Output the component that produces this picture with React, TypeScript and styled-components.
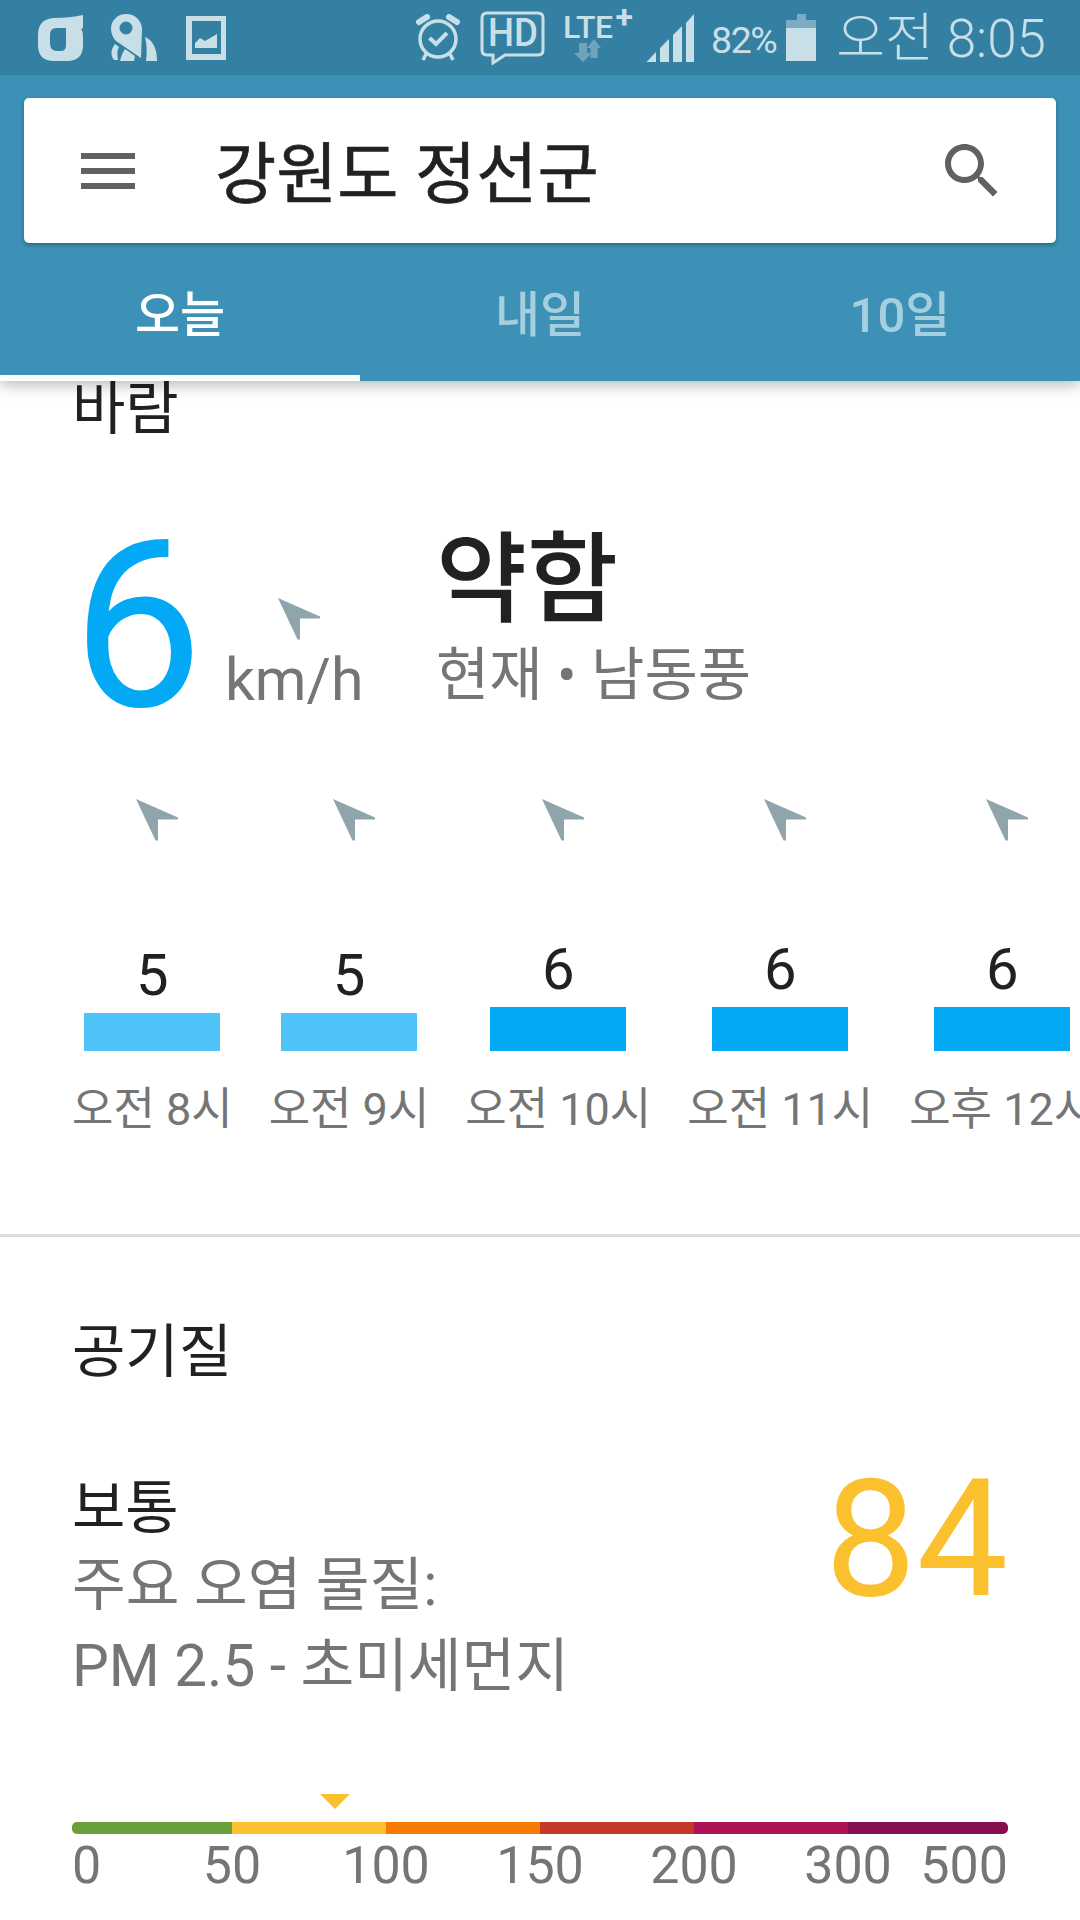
import React from "react";
import styled, { createGlobalStyle } from "styled-components";

const GlobalStyle = createGlobalStyle`
  html, body {
    margin: 0;
    padding: 0;
    background: #fff;
  }
  body {
    font-family: Roboto, "Noto Sans CJK KR", sans-serif;
  }
`;

const iconColor = "#c9dfe7";
const grey = "#757575";
const dark = "#212121";

const Screen = styled.div`
  width: 1080px;
  height: 1920px;
  overflow: hidden;
  display: flex;
  flex-direction: column;
  background: #fff;
`;

const TopArea = styled.header`
  position: relative;
  z-index: 2;
  background: #3d91b6;
  box-shadow: 0 4px 14px rgba(0, 0, 0, 0.28);
`;

const StatusBar = styled.div`
  height: 75px;
  background: #3480a2;
  display: flex;
  align-items: center;
  justify-content: space-between;
  padding: 0 34px 0 38px;
  color: ${iconColor};
`;

const StatusGroup = styled.div`
  display: flex;
  align-items: center;
`;

const LteBox = styled.div`
  width: 71px;
  height: 50px;
  margin: 3px 12px 0 18px;
  display: flex;
  flex-direction: column;
  align-items: flex-start;
`;

const LteText = styled.div`
  font-size: 32px;
  font-weight: 500;
  line-height: 27px;
  height: 27px;
  letter-spacing: -0.5px;
  white-space: nowrap;
`;

const LtePlus = styled.span`
  font-size: 32px;
  font-weight: 700;
  line-height: 0;
  vertical-align: 10px;
  letter-spacing: 0;
  margin-left: 3px;
`;

const Percent = styled.span`
  font-size: 37.5px;
  letter-spacing: -1.5px;
  margin: 4px 10px 0 17px;
`;

const Clock = styled.span`
  font-size: 53px;
  line-height: 60px;
  margin: 2px 0 0 20px;
  font-weight: 300;
`;

const SearchCard = styled.div`
  height: 145px;
  margin: 23px 24px 0;
  background: #fff;
  border-radius: 5px;
  box-shadow: 0 2px 4px rgba(0, 0, 0, 0.3);
  display: flex;
  align-items: center;
  padding: 0 48px 0 48px;
`;

const SearchTitle = styled.div`
  flex: 1;
  margin-left: 71px;
  margin-bottom: 4px;
  font-size: 66.5px;
  -webkit-text-stroke: 0.6px ${dark};
  color: ${dark};
  white-space: nowrap;
`;

const Tabs = styled.nav`
  display: flex;
  height: 138px;
`;

const Tab = styled.div<{ $active?: boolean }>`
  flex: 1;
  display: flex;
  align-items: center;
  justify-content: center;
  padding-top: 3px;
  box-sizing: border-box;
  font-size: 49px;
  font-weight: 500;
  color: ${(p) => (p.$active ? "#fff" : "#a5cfdf")};
  border-bottom: 6px solid ${(p) => (p.$active ? "#fff" : "transparent")};
`;

const SectionTitle = styled.h2`
  margin: 0;
  font-size: 58px;
  font-weight: 400;
  line-height: 68px;
  color: ${dark};
`;

const WindSection = styled.section`
  padding: 0 0 0 72px;
  margin-top: -6px;
  height: 862px;
  box-sizing: border-box;
  border-bottom: 3px solid #dcdcdc;
  overflow: hidden;
`;

const CurrentRow = styled.div`
  display: flex;
  height: 300px;
  margin-top: 49px;
`;

const BigValue = styled.div`
  font-size: 233px;
  font-weight: 400;
  line-height: 270px;
  color: #03a9f4;
`;

const UnitBlock = styled.div`
  width: 211px;
  margin-left: 22px;
  display: flex;
  flex-direction: column;
  height: 270px;
`;

const UnitArrow = styled.div`
  margin: 106px 0 0 53px;
  height: 42px;
`;

const Unit = styled.div`
  font-size: 59px;
  line-height: 70px;
  margin-top: 5px;
  color: ${grey};
`;

const WindSummary = styled.div`
  display: flex;
  flex-direction: column;
`;

const WindLevel = styled.div`
  font-size: 99px;
  font-weight: 500;
  line-height: 120px;
  margin-top: 28px;
  color: ${dark};
`;

const WindNote = styled.div`
  font-size: 58px;
  line-height: 70px;
  color: ${grey};
  white-space: nowrap;
`;

const HourRow = styled.div`
  display: flex;
  gap: 36px;
  margin-top: 7px;
`;

const HourCol = styled.div`
  display: flex;
  flex-direction: column;
  align-items: center;
  flex-shrink: 0;
`;

const HourArrow = styled.div`
  height: 42px;
  margin-left: 10px;
`;

const BarArea = styled.div`
  height: 210px;
  display: flex;
  flex-direction: column;
  justify-content: flex-end;
  align-items: center;
`;

const HourValue = styled.div`
  font-size: 58px;
  line-height: 70px;
  margin-bottom: 3px;
  color: ${dark};
`;

const HourBar = styled.div<{ $strong?: boolean }>`
  width: 136px;
  height: ${(p) => (p.$strong ? 44 : 38)}px;
  background: ${(p) => (p.$strong ? "#03a9f4" : "#4fc3f7")};
`;

const HourLabel = styled.div`
  font-size: 45px;
  line-height: 60px;
  margin-top: 29px;
  color: ${grey};
  white-space: nowrap;
`;

const AirSection = styled.section`
  padding: 0 72px;
`;

const AirTitle = styled(SectionTitle)`
  margin-top: 81px;
`;

const AirRow = styled.div`
  display: flex;
  justify-content: space-between;
  margin-top: 85px;
  height: 323px;
`;

const AirText = styled.div`
  display: flex;
  flex-direction: column;
`;

const AirStatus = styled.div`
  font-size: 58px;
  line-height: 74px;
  color: ${dark};
`;

const AirLine = styled.div`
  font-size: 58.4px;
  line-height: 81px;
  color: ${grey};
`;

const AirValue = styled.div`
  font-size: 163px;
  font-weight: 400;
  line-height: 190px;
  color: #fbc02d;
  margin-top: -26px;
`;

const Marker = styled.div`
  width: 0;
  height: 0;
  margin-left: 248px;
  border-left: 15px solid transparent;
  border-right: 15px solid transparent;
  border-top: 15px solid #fbc02d;
`;

const Scale = styled.div`
  display: flex;
  height: 12px;
  margin-top: 13px;
  border-radius: 5px;
  overflow: hidden;
`;

const ScaleSegment = styled.div<{ $width: number; $color: string }>`
  width: ${(p) => p.$width}px;
  background: ${(p) => p.$color};
`;

const ScaleLabels = styled.div`
  display: grid;
  grid-template-columns: 100px 120px 188px 120px 188px 120px 100px;
  font-size: 52px;
  line-height: 60px;
  margin-top: 2px;
  color: ${grey};
`;

const ScaleLabel = styled.span<{ $align: string }>`
  text-align: ${(p) => p.$align};
`;

const GLogo = () => (
  <svg width="45" height="46" viewBox="0 0 45 46" fill={iconColor}>
    <path
      fillRule="evenodd"
      d="M45 0V13L43 14Q45 16 45 22V30Q45 46 29 46H16Q0 46 0 30V20Q0 4 16 3Q32 3 45 0ZM18 13Q12 13 12 20V28Q12 36 19 36H23Q28 36 28 30V13Z"
    />
  </svg>
);

const PinLogo = () => (
  <svg width="46" height="47" viewBox="0 0 46 47" fill={iconColor} style={{ marginLeft: 28 }}>
    <path
      fillRule="evenodd"
      d="M15 0C24 0 30 6 31 14L30 44L5 27C2 24 0 19 0 15C0 6 7 0 15 0ZM15 7.5A6.5 6.5 0 1 0 15 20.5A6.5 6.5 0 1 0 15 7.5Z"
    />
    <path d="M4 30L8 33C6 37 6 41 7 46H3C-1 41 0 35 4 30Z" />
    <path d="M14 35L24 42L23 47H9C10 42 12 38 14 35Z" />
    <path d="M34 23C42 26 46 35 46 47H35C36 38 36 30 34 23Z" />
  </svg>
);

const PictureIcon = () => (
  <svg width="40" height="44" viewBox="0 0 40 44" fill={iconColor} style={{ marginLeft: 29 }}>
    <path
      fillRule="evenodd"
      d="M0 0H40V44H0ZM6 5V38H35V5ZM9 32V27L14 22L19 25L31 18V32Z"
    />
  </svg>
);

const AlarmIcon = () => (
  <svg width="45" height="47" viewBox="0 0 45 47" fill="none" stroke={iconColor}>
    <circle cx="22" cy="25" r="18" strokeWidth="3.5" />
    <path d="M3 8L11 3M41 8L33 3" strokeWidth="6" strokeLinecap="round" />
    <path d="M13.5 24L20 30L31 19" strokeWidth="4" />
    <path d="M10 40L7 46M34 40L37 46" strokeWidth="3.5" />
  </svg>
);

const HdIcon = () => (
  <svg width="65" height="54" viewBox="0 0 65 54" style={{ marginLeft: 19 }}>
    <path
      d="M7 2H58Q63 2 63 7V39Q63 44 58 44H25L13 52V44H7Q2 44 2 39V7Q2 2 7 2Z"
      fill="none"
      stroke={iconColor}
      strokeWidth="3"
    />
    <text
      x="33"
      y="35"
      textAnchor="middle"
      fontFamily="Roboto, sans-serif"
      fontSize="38"
      fontWeight="500"
      fill={iconColor}
      textLength="50"
      lengthAdjust="spacingAndGlyphs"
    >
      HD
    </text>
  </svg>
);

const LteArrows = () => (
  <svg width="28" height="23" viewBox="0 0 28 23" fill="#6fa4ba" style={{ marginLeft: 11, marginTop: -2 }}>
    <path d="M5 4H13V14H18L9 23L0 14H5Z" />
    <path d="M16.5 19H23.5V9H27L20 0L13 9H16.5Z" />
  </svg>
);

const SignalIcon = () => (
  <svg width="48" height="48" viewBox="0 0 48 48" fill={iconColor}>
    <path d="M0.5 48L10 38V48Z" />
    <path d="M14 34L23 25V48H14Z" />
    <path d="M27 21L36 12V48H27Z" />
    <path d="M40 9L48 0V48H40Z" />
  </svg>
);

const BatteryIcon = () => (
  <svg width="30" height="47" viewBox="0 0 30 47">
    <path d="M11 0H20V6H30V14H0V6H11Z" fill="#7aacc4" />
    <path d="M0 14H30V47H0Z" fill={iconColor} />
  </svg>
);

const MenuIcon = () => (
  <svg width="72" height="72" viewBox="0 0 24 24" fill="#616161">
    <path d="M3 18h18v-2H3v2zm0-5h18v-2H3v2zm0-5h18V6H3v2z" />
  </svg>
);

const SearchIcon = () => (
  <svg width="72" height="72" viewBox="0 0 24 24" fill="#616161">
    <path d="M15.5 14h-.79l-.28-.27C15.41 12.59 16 11.11 16 9.5 16 5.91 13.09 3 9.5 3S3 5.91 3 9.5 5.91 16 9.5 16c1.61 0 3.09-.59 4.23-1.57l.27.28v.79l5 4.99L20.49 19l-4.99-5zm-6 0C7.01 14 5 11.99 5 9.5S7.01 5 9.5 5 14 7.01 14 9.5 11.99 14 9.5 14z" />
  </svg>
);

const WindArrow = () => (
  <svg width="42" height="42" viewBox="0 0 42 42" fill="#90a4ae">
    <path d="M0 0L42 18.5V20.5H22V41.5H19.5Z" />
  </svg>
);

const hours = [
  { value: 5, label: "오전 8시" },
  { value: 5, label: "오전 9시" },
  { value: 6, label: "오전 10시" },
  { value: 6, label: "오전 11시" },
  { value: 6, label: "오후 12시" },
];

const segments = [
  { width: 160, color: "#689f38" },
  { width: 154, color: "#fbc02d" },
  { width: 154, color: "#f57c00" },
  { width: 154, color: "#c53929" },
  { width: 154, color: "#ad1457" },
  { width: 160, color: "#880e4f" },
];

const scaleLabels = ["0", "50", "100", "150", "200", "300", "500"];

function App(): JSX.Element {
  return (
    <Screen>
      <GlobalStyle />
      <TopArea>
        <StatusBar>
          <StatusGroup>
            <GLogo />
            <PinLogo />
            <PictureIcon />
          </StatusGroup>
          <StatusGroup>
            <AlarmIcon />
            <HdIcon />
            <LteBox>
              <LteText>
                LTE<LtePlus>+</LtePlus>
              </LteText>
              <LteArrows />
            </LteBox>
            <SignalIcon />
            <Percent>82%</Percent>
            <BatteryIcon />
            <Clock>오전 8:05</Clock>
          </StatusGroup>
        </StatusBar>
        <SearchCard>
          <MenuIcon />
          <SearchTitle>강원도 정선군</SearchTitle>
          <SearchIcon />
        </SearchCard>
        <Tabs>
          <Tab $active>오늘</Tab>
          <Tab>내일</Tab>
          <Tab>10일</Tab>
        </Tabs>
      </TopArea>

      <WindSection>
        <SectionTitle>바람</SectionTitle>
        <CurrentRow>
          <BigValue>6</BigValue>
          <UnitBlock>
            <UnitArrow>
              <WindArrow />
            </UnitArrow>
            <Unit>km/h</Unit>
          </UnitBlock>
          <WindSummary>
            <WindLevel>약함</WindLevel>
            <WindNote>현재 • 남동풍</WindNote>
          </WindSummary>
        </CurrentRow>
        <HourRow>
          {hours.map((hour) => (
            <HourCol key={hour.label}>
              <HourArrow>
                <WindArrow />
              </HourArrow>
              <BarArea>
                <HourValue>{hour.value}</HourValue>
                <HourBar $strong={hour.value > 5} />
              </BarArea>
              <HourLabel>{hour.label}</HourLabel>
            </HourCol>
          ))}
        </HourRow>
      </WindSection>

      <AirSection>
        <AirTitle>공기질</AirTitle>
        <AirRow>
          <AirText>
            <AirStatus>보통</AirStatus>
            <AirLine>주요 오염 물질:</AirLine>
            <AirLine>PM 2.5 - 초미세먼지</AirLine>
          </AirText>
          <AirValue>84</AirValue>
        </AirRow>
        <Marker />
        <Scale>
          {segments.map((segment) => (
            <ScaleSegment key={segment.color} $width={segment.width} $color={segment.color} />
          ))}
        </Scale>
        <ScaleLabels>
          {scaleLabels.map((label, i) => (
            <ScaleLabel key={label} $align={i === 0 ? "left" : i === scaleLabels.length - 1 ? "right" : "center"}>
              {label}
            </ScaleLabel>
          ))}
        </ScaleLabels>
      </AirSection>
    </Screen>
  );
}

export default App;
